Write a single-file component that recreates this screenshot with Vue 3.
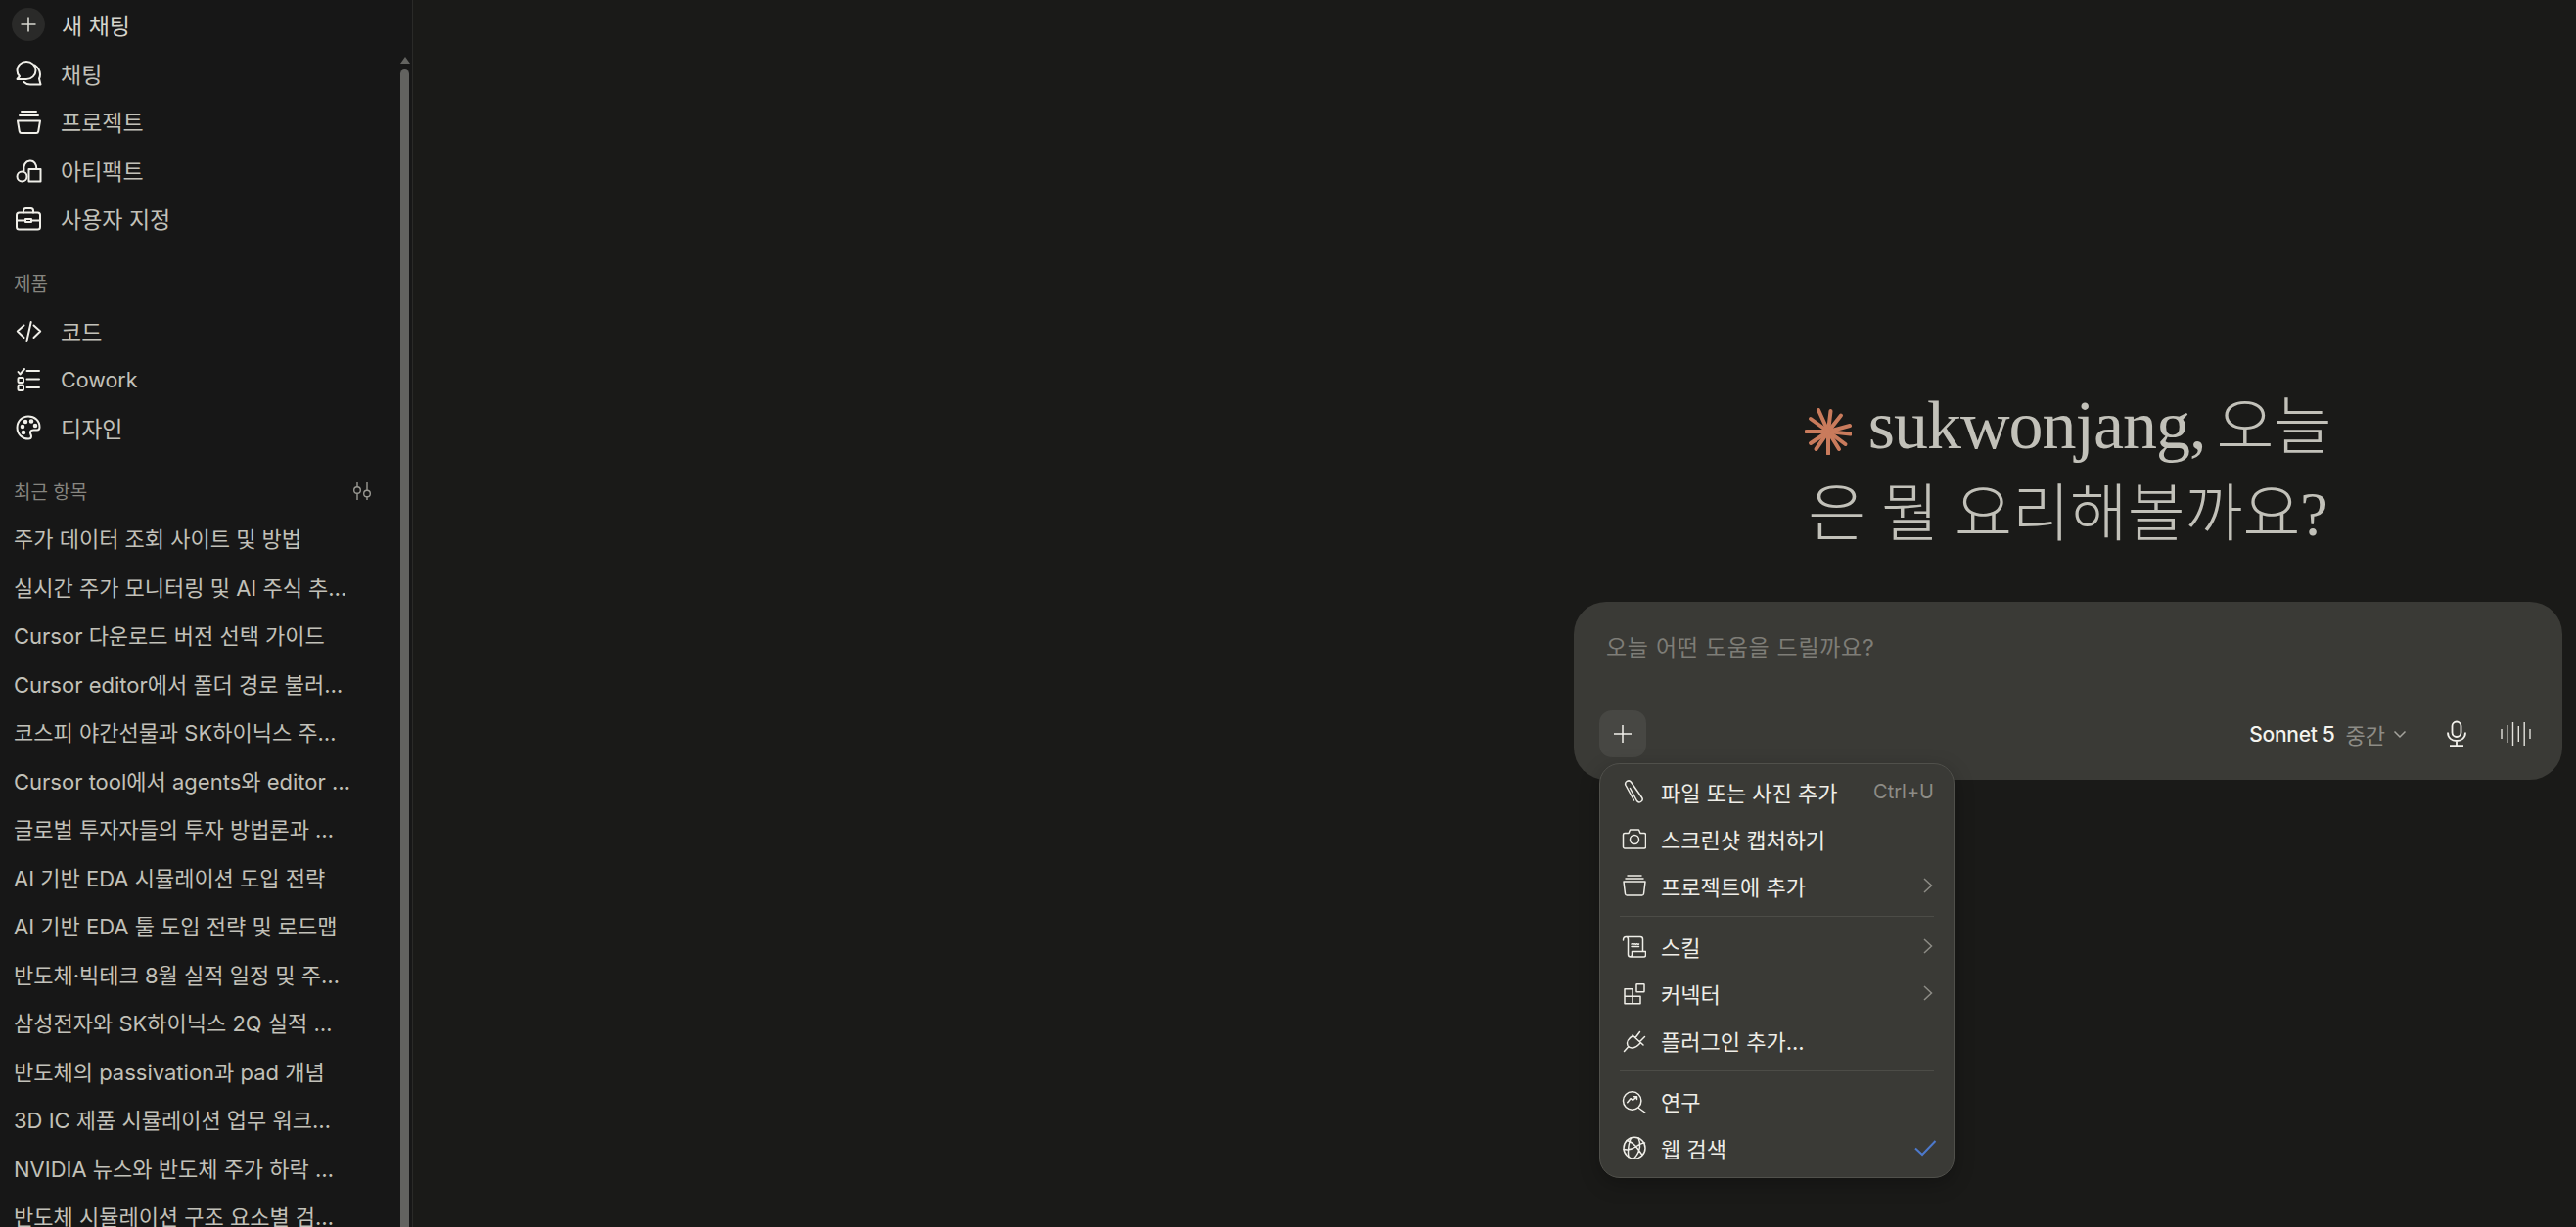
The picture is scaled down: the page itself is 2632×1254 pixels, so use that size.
<template>
  <div class="app">
    <aside class="sidebar">
      <div class="side-scroll">
        <div class="nav-row new-chat">
          <span class="plus-circle">
            <svg viewBox="0 0 20 20" width="20" height="20"><path d="M10 2.500v15M2.500 10h15" stroke="#d8d7d0" stroke-width="1.600" fill="none"/></svg>
          </span>
          <span>새 채팅</span>
        </div>
        <div v-for="item in topNav" :key="item.label" class="nav-row">
          <span class="nav-icon" v-html="item.icon"></span>
          <span>{{ item.label }}</span>
        </div>

        <div class="section-label product-label">제품</div>
        <div v-for="item in productNav" :key="item.label" class="nav-row">
          <span class="nav-icon" v-html="item.icon"></span>
          <span :class="{ latin: item.label === 'Cowork' }">{{ item.label }}</span>
        </div>

        <div class="section-label recent-label">
          <span>최근 항목</span>
          <svg viewBox="0 0 20 20" width="20" height="20" class="filter-icon">
            <path d="M5 1v4.500M5 12.500V19M15 1v8M15 16v3" stroke="#9a9993" stroke-width="1.400" fill="none"/>
            <circle cx="5" cy="9" r="3.300" stroke="#9a9993" stroke-width="1.400" fill="none"/>
            <circle cx="15" cy="12.500" r="3.300" stroke="#9a9993" stroke-width="1.400" fill="none"/>
          </svg>
        </div>
        <div v-for="chat in recents" :key="chat" class="recent-row">{{ chat }}</div>
      </div>
      <div class="scrollbar">
        <span class="scroll-arrow"></span>
        <span class="scroll-thumb"></span>
      </div>
    </aside>

    <main class="main">
      <h1 class="greeting">
        <svg class="spark" viewBox="0 0 48 48" width="48" height="48">
          <g stroke="#c97b5c" stroke-width="4" stroke-linecap="round">
            <path d="M24 24 L26.500 3"/><path d="M24 24 L37 7.500"/><path d="M24 24 L46 18"/>
            <path d="M24 24 L46.500 26.500"/><path d="M24 24 L41.500 37"/>
            <path d="M24 24 L35 42"/><path d="M24 24 L24 47"/>
            <path d="M24 24 L11.500 42"/><path d="M24 24 L6 36"/><path d="M24 24 L1.500 24"/>
            <path d="M24 24 L6 11"/><path d="M24 24 L14 2"/>
          </g>
        </svg>
        <span class="name">sukwonjang,</span> 오늘은 뭘 요리해볼까요?
      </h1>

      <div class="composer">
        <div class="placeholder">오늘 어떤 도움을 드릴까요?</div>
        <div class="composer-bar">
          <button class="add-btn">
            <svg viewBox="0 0 20 20" width="20" height="20"><path d="M10 1v18M1 10h18" stroke="#f2f1ec" stroke-width="1.500" fill="none"/></svg>
          </button>
          <div class="composer-right">
            <span class="model">Sonnet 5</span>
            <span class="effort">중간</span>
            <svg viewBox="0 0 14 14" width="14" height="14" class="chev"><path d="M1.500 4.500 7 10l5.500-5.500" stroke="#a5a49e" stroke-width="1.500" fill="none"/></svg>
            <svg viewBox="0 0 24 28" width="24" height="28" class="mic">
              <rect x="7.500" y="1.500" width="9" height="15.500" rx="4.500" stroke="#f2f1ec" stroke-width="1.800" fill="none"/>
              <path d="M3 12.500c0 5.500 4 8.500 9 8.500s9-3 9-8.500M12 21v5M5 26.200h14" stroke="#f2f1ec" stroke-width="1.800" fill="none"/>
            </svg>
            <svg viewBox="0 0 32 26" width="32" height="26" class="wave">
              <path d="M1 8v10M6.800 4v18M12.500 1v24M18.300 5v16M24.200 1v24M30 8v10" stroke="#e3e2dc" stroke-width="1.400" fill="none"/>
            </svg>
          </div>
        </div>

        <div class="menu">
          <template v-for="(group, i) in menu" :key="i">
            <div v-if="i > 0" class="menu-divider"></div>
            <div v-for="row in group" :key="row.label" class="menu-row">
              <span class="menu-icon" v-html="row.icon"></span>
              <span class="menu-label">{{ row.label }}</span>
              <span v-if="row.shortcut" class="shortcut">{{ row.shortcut }}</span>
              <svg v-if="row.arrow" viewBox="0 0 10 16" width="10" height="16" class="menu-arrow"><path d="M1 1l7.500 7L1 15" stroke="#8d8c86" stroke-width="1.500" fill="none"/></svg>
              <svg v-if="row.checked" viewBox="0 0 24 18" width="24" height="18" class="menu-check"><path d="M2 9.500 9 16 22.500 2" stroke="#4d79cc" stroke-width="2" fill="none"/></svg>
            </div>
          </template>
        </div>
      </div>
    </main>
  </div>
</template>

<script setup>
const ic = (body) => `<svg viewBox="0 0 28 28" width="28" height="28" fill="none" stroke="currentColor" stroke-width="2" stroke-linecap="round" stroke-linejoin="round">${body}</svg>`

const topNav = [
  { label: '채팅', icon: ic('<path d="M12 2C6.800 2 2.500 6 2.500 11c0 2.500 1 4.500 2.500 6l-2.500 3H12c5.200 0 9.500-4 9.500-9S17.200 2 12 2z"/><path d="M20.500 5.500c3.500 2.500 5.500 5.500 5.500 9.500 0 2-.5 3.500-1 4.500l1.500 6H16c-2.500 0-5-1-6.500-2.500"/>') },
  { label: '프로젝트', icon: ic('<path d="M7 4h15M5 8h19M3 13.500h23l-1.800 10.800c-.2 1-1 1.700-2 1.700H6.800c-1 0-1.800-.7-2-1.700z"/>') },
  { label: '아티팩트', icon: ic('<circle cx="7.500" cy="20.500" r="5"/><path d="M9.500 14.500C8.500 9 11 5 15.500 4.500c4-.4 7 3 6.800 8.500"/><path d="M14.500 25.500H26.500V13H14.500z"/>') },
  { label: '사용자 지정', icon: ic('<rect x="2" y="8.500" width="24" height="17" rx="2.500"/><path d="M9 8.500V6.500C9 5 10 4 11.500 4h5C18 4 19 5 19 6.500v2M2 16.500h9M17 16.500h9M11 15h6v3h-6z"/>') }
]

const productNav = [
  { label: '코드', icon: ic('<path d="M9.500 8.500 2.800 14.500l6.700 6.500M19.500 8.500l6.700 6 -6.700 6.500M16.700 5l-4.400 20"/>') },
  { label: 'Cowork', icon: ic('<path d="M3.500 7l2 2.500L10 4M12.500 6H25M12.500 14.500H25M12.500 23H25"/><rect x="3.500" y="13" width="5.500" height="5" rx="1"/><rect x="3.500" y="20.500" width="5.500" height="5.500" rx="1"/>') },
  { label: '디자인', icon: ic('<path d="M14 2.500C7.500 2.500 2.500 7.500 2.500 14S7.500 25.500 14 25.500c2 0 3-1.200 3-2.500 0-2-1.500-2.500-1-4.500.4-1.500 2-2 3.500-2H23c1.500 0 2.500-1 2.500-3C25.500 7 20.500 2.500 14 2.500z"/><circle cx="8" cy="13" r="1.300" fill="currentColor"/><circle cx="11" cy="8" r="1.300" fill="currentColor"/><circle cx="17" cy="7.500" r="1.300" fill="currentColor"/><circle cx="21" cy="12" r="1.300" fill="currentColor"/><circle cx="9" cy="19" r="1.300" fill="currentColor"/>') }
]

const recents = [
  '주가 데이터 조회 사이트 및 방법',
  '실시간 주가 모니터링 및 AI 주식 추…',
  'Cursor 다운로드 버전 선택 가이드',
  'Cursor editor에서 폴더 경로 불러…',
  '코스피 야간선물과 SK하이닉스 주…',
  'Cursor tool에서 agents와 editor …',
  '글로벌 투자자들의 투자 방법론과 …',
  'AI 기반 EDA 시뮬레이션 도입 전략',
  'AI 기반 EDA 툴 도입 전략 및 로드맵',
  '반도체·빅테크 8월 실적 일정 및 주…',
  '삼성전자와 SK하이닉스 2Q 실적 …',
  '반도체의 passivation과 pad 개념',
  '3D IC 제품 시뮬레이션 업무 워크…',
  'NVIDIA 뉴스와 반도체 주가 하락 …',
  '반도체 시뮬레이션 구조 요소별 검…'
]

const mi = (body) => `<svg viewBox="0 0 26 26" width="26" height="26" fill="none" stroke="currentColor" stroke-width="1.500" stroke-linecap="round" stroke-linejoin="round">${body}</svg>`

const menu = [
  [
    { label: '파일 또는 사진 추가', shortcut: 'Ctrl+U', icon: mi('<path d="M13.500 22 5 6.500a3.200 3.200 0 0 1 5.500-3.200L21.500 19a3 3 0 0 1-5 3.500L9.500 9.500"/>') },
    { label: '스크린샷 캡처하기', icon: mi('<path d="M2.500 9c0-1 .7-1.500 1.500-1.500h4L9.500 4h9L20 7.500h4c.8 0 1.500.5 1.500 1.500v12.500c0 .8-.7 1.500-1.500 1.500H4c-.8 0-1.500-.7-1.500-1.500z"/><circle cx="14" cy="14" r="4.500"/>') },
    { label: '프로젝트에 추가', arrow: true, icon: mi('<path d="M7 3h14M5 6h18M3 9h22l-1.500 12.500c-.1.800-.8 1.500-1.700 1.500H6.200c-.9 0-1.600-.7-1.700-1.500z"/>') }
  ],
  [
    { label: '스킬', arrow: true, icon: mi('<path d="M2.500 7C2.500 4.500 4 3.500 5.500 3.500H20c1.500 0 2.500 1 2.500 2.500v12.500M5.500 3.500C7 3.500 7.500 5 7.500 6.500v15c0 1.700 1 2.500 2.500 2.500h13.500c1.500 0 2-1 2-2v-3.500h-14v3c0 1.500-1 2.500-2 2.500M11 11c1-1 1.500.6 2.500 0s1.500.6 2.500 0 1.500.6 2.500 0M11 13.500h7.500"/>') },
    { label: '커넥터', arrow: true, icon: mi('<path d="M4 8.700h8v15H4zM4 16.300h16v7.400h-8"/><rect x="16" y="3.700" width="8" height="8" rx=".5"/>') },
    { label: '플러그인 추가...', icon: mi('<path d="M12 8l11 10M15 10.500l4.500-6M19.500 14.500l5-5M12.500 8.500C8 11 5.500 15 7 18.500c2 3.500 7 4 13-2.500M7.500 20l-4 4.500"/>') }
  ],
  [
    { label: '연구', icon: mi('<circle cx="11.700" cy="13" r="9.200"/><path d="m18.500 20.500 7 5M6.700 14.700l3.300-4 2.300 1.600 4-3.300M13.500 8.700H16.500V11.500"/>') },
    { label: '웹 검색', checked: true, icon: mi('<circle cx="14" cy="13.300" r="11"/><path d="M6 5.500c4 1 8 4 11 8s5 7 5 7M10.500 3c-2 4-3 9-3 15 0 2 .5 4.500.5 4.500M18 3c1.500 3 2 5.500 1.500 9-.5 4-3 9-6 12M3 14.500c4 1 9 0 13-3 3-2 6-3.500 8.500-3.500"/>') }
  ]
]
</script>

<style>
html, body { margin: 0; background: #1a1a18; }
</style>

<style scoped>
.app {
  display: flex;
  width: 2632px;
  height: 1254px;
  overflow: hidden;
  background: #1a1a18;
  font-family: Inter, "Noto Sans CJK KR", sans-serif;
  color: #c2c1b9;
}
.sidebar {
  width: 421px;
  height: 1254px;
  flex: none;
  display: flex;
  background: #171717;
  border-right: 1px solid #2a2a28;
  overflow: hidden;
}
.side-scroll {
  flex: 1;
  min-width: 0;
  padding-left: 14px;
}
.nav-row {
  display: flex;
  align-items: center;
  height: 49.500px;
  gap: 19px;
  padding-left: 1px;
  font-size: 23px;
}
.latin { font-size: 21.500px; margin-top: 2px; }
.new-chat { height: 50px; gap: 17px; color: #d6d5cc; }
.plus-circle {
  width: 34px;
  height: 34px;
  margin-left: -3px;
  border-radius: 50%;
  background: #2a2a29;
  display: flex;
  align-items: center;
  justify-content: center;
}
.nav-icon {
  width: 28px;
  height: 28px;
  color: #f0efe9;
  display: block;
}
.nav-icon :deep(svg) { display: block; }
.section-label {
  font-size: 19px;
  color: #86857f;
  display: flex;
  align-items: center;
  justify-content: space-between;
  height: 30px;
}
.product-label { margin-top: 25px; margin-bottom: 10px; }
.recent-label { margin-top: 25px; margin-bottom: 10.500px; padding-right: 29px; }
.filter-icon { display: block; }
.recent-row {
  height: 49.500px;
  line-height: 49.500px;
  font-size: 22px;
  white-space: nowrap;
  overflow: hidden;
  text-overflow: ellipsis;
}
.scrollbar {
  width: 9px;
  flex: none;
  margin-right: 3px;
  padding-top: 58px;
  display: flex;
  flex-direction: column;
  align-items: center;
}
.scroll-arrow {
  width: 0;
  height: 0;
  border-left: 5px solid transparent;
  border-right: 5px solid transparent;
  border-bottom: 7px solid #636360;
  margin-bottom: 6px;
}
.scroll-thumb {
  width: 9px;
  flex: 1;
  background: #636360;
  border-radius: 5px 5px 0 0;
}

.main {
  flex: 1;
  padding: 390px 0 0 1186px;
  min-width: 0;
}
.greeting {
  width: 570px;
  margin: 0 0 45px 220px;
  font-weight: 300;
  font-size: 64px;
  line-height: 89px;
  color: #c2c1b9;
  text-align: center;
  word-break: break-all;
  font-family: "Liberation Serif", "Noto Sans CJK KR", serif;
}
.spark { vertical-align: -7px; margin-right: 17px; }
.name { font-weight: 400; font-size: 70px; letter-spacing: -1px; margin-right: -5px; }

.composer {
  position: relative;
  width: 1010px;
  height: 182px;
  background: #3a3a36;
  border-radius: 33px;
  box-sizing: border-box;
  padding: 28px 26px 23px;
  display: flex;
  flex-direction: column;
  justify-content: space-between;
}
.placeholder {
  font-size: 23px;
  letter-spacing: 0.700px;
  color: #7e7d77;
  padding-left: 7px;
}
.composer-bar {
  display: flex;
  align-items: center;
  justify-content: space-between;
}
.add-btn {
  width: 48px;
  height: 48px;
  border: none;
  padding: 0;
  border-radius: 13px;
  background: #474743;
  display: flex;
  align-items: center;
  justify-content: center;
}
.composer-right {
  display: flex;
  align-items: center;
  padding-right: 5px;
}
.model { font-size: 21px; color: #f4f3ee; font-weight: 500; letter-spacing: -0.300px; }
.effort { font-size: 22px; color: #8d8c86; margin-left: 11px; }
.chev { margin-left: 8px; }
.mic { margin-left: 39px; }
.wave { margin-left: 33px; }

.menu {
  position: absolute;
  left: 26px;
  top: 165px;
  width: 363px;
  box-sizing: border-box;
  padding: 4px 20px 6px 20px;
  background: #3a3a36;
  border: 1px solid #50504b;
  border-radius: 21px;
  box-shadow: 0 6px 20px rgba(0, 0, 0, 0.25);
}
.menu-row {
  display: flex;
  align-items: center;
  height: 48px;
  font-size: 22px;
  color: #efeee8;
  gap: 15px;
}
.menu-icon { width: 26px; height: 26px; flex: none; margin-left: 1px; }
.menu-icon :deep(svg) { display: block; }
.menu-label { flex: 1; white-space: nowrap; }
.shortcut { font-size: 20px; color: #8d8c86; }
.menu-arrow { margin-right: 1px; }
.menu-check { margin-right: -3px; }
.menu-divider {
  height: 1.500px;
  margin: 6.500px 0 6px;
  background: #4c4c47;
}
</style>
